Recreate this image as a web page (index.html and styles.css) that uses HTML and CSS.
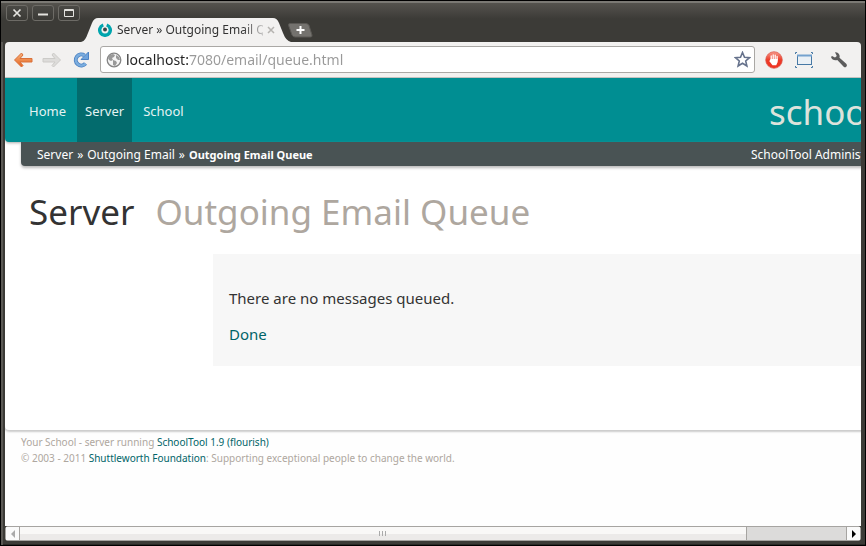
FILE: index.html
```html
<!DOCTYPE html>
<html lang="en">
<head>
<meta charset="utf-8">
<title>Server » Outgoing Email Queue</title>
<link rel="stylesheet" href="styles.css">
</head>
<body>
<div class="window">
  <div class="titlebar">
    <div class="window-buttons">
      <button type="button" aria-label="Close"><svg width="10" height="10" viewBox="0 0 10 10"><path d="M1.500 1.500l7 7M8.500 1.500l-7 7" stroke="#e4e3df" stroke-width="1.700"/></svg></button>
      <button type="button" aria-label="Minimize"><svg width="10" height="10" viewBox="0 0 10 10"><path d="M0 6.500h10" stroke="#e4e3df" stroke-width="2"/></svg></button>
      <button type="button" aria-label="Maximize"><svg width="10" height="10" viewBox="0 0 10 10"><path d="M.5 1.500h9v7h-9zM.5 2.500h9" fill="none" stroke="#e4e3df"/></svg></button>
    </div>
    <div class="tab">
      <svg class="tab-shape" viewBox="0 0 210 24" preserveAspectRatio="none"><path d="M0 24C4 23 5 20 7 15L11 5Q13 0 17 0H192Q196 0 198 5L202 15Q205 23 210 24Z" fill="#f2f1f0"/></svg>
      <svg class="tab-icon" width="14" height="14" viewBox="0 0 14 14"><path d="M5.300 2A5.300 5.300 0 1 0 8.700 2" fill="none" stroke="#00a5ae" stroke-width="3.400"/><circle cx="7" cy="6.500" r="2" fill="#3b4648"/></svg>
      <span class="tab-title">Server » Outgoing Email Queue</span>
      <button type="button" class="tab-close" aria-label="Close tab"><svg width="8" height="8" viewBox="0 0 8 8"><path d="M1 1l6 6M7 1l-6 6" stroke="#b5b3b0" stroke-width="1.500"/></svg></button>
    </div>
    <button type="button" class="new-tab" aria-label="New tab"><svg width="25" height="15" viewBox="0 0 25 15"><path d="M2 .5H18Q20 .5 21 2.500L24 12Q24.500 14 22.500 14H7Q5 14 4 12L.6 2.500Q0 .5 2 .5Z" fill="#74726e" stroke="#5a5854"/><path d="M12.500 3v8M8.500 7h8" stroke="#fff" stroke-width="2"/></svg></button>
  </div>

  <div class="toolbar">
    <button type="button" class="tool" aria-label="Back"><svg width="20" height="18" viewBox="0 0 20 18"><defs><linearGradient id="o" x2="0" y2="1"><stop stop-color="#f8b47e"/><stop offset="1" stop-color="#e4601c"/></linearGradient></defs><path d="M8.500 2L1.500 9l7 7 1.500-1.500L7 11h12V7.500H7L10 4z" fill="url(#o)" stroke="#d9713a" stroke-linejoin="round"/></svg></button>
    <button type="button" class="tool" aria-label="Forward"><svg width="20" height="18" viewBox="0 0 20 18"><path d="M11.500 2l7 7-7 7-1.500-1.500L13 11H1V7.500H13L10 4z" fill="#dddcda" stroke="#cccbc8" stroke-linejoin="round"/></svg></button>
    <button type="button" class="tool" aria-label="Reload"><svg width="18" height="18" viewBox="0 0 18 18"><path d="M13.500 12.500A5.500 5.500 0 1 1 12.500 4.500" fill="none" stroke="#4c82c3" stroke-width="4"/><path d="M16.500 1v7.500H9z" fill="#6fa3dc" stroke="#4c82c3"/><path d="M13.500 12.500A5.500 5.500 0 1 1 12.500 4.500" fill="none" stroke="#7badde" stroke-width="2.400"/></svg></button>
    <div class="address">
      <svg width="16" height="16" viewBox="0 0 16 16"><circle cx="8" cy="8" r="6.800" fill="#f4f4f4" stroke="#858585" stroke-width="1.300"/><path d="M2 6Q3 2.500 7 2l2 1-1 2-2 1 1 2-2 1-2-1zM7 8l3 1 1 2-2 3-2-1zM10 3l3 2 1 3-2 0-2-2z" fill="#999"/></svg>
      <input type="text" aria-label="Address" value="localhost:7080/email/queue.html">
      <button type="button" class="star" aria-label="Bookmark"><svg width="17" height="17" viewBox="0 0 17 17"><path d="M8.500 1.500l2 4.800 5 .4-3.800 3.300 1.200 5-4.400-2.700L4.100 15l1.200-5L1.500 6.700l5-.4z" fill="#fff" stroke="#66728c" stroke-width="1.600"/></svg></button>
    </div>
    <button type="button" class="tool" aria-label="Block ads"><svg width="18" height="18" viewBox="0 0 18 18"><defs><linearGradient id="r" x2="0" y2="1"><stop stop-color="#f79a8b"/><stop offset=".5" stop-color="#ec3b28"/><stop offset="1" stop-color="#f03322"/></linearGradient></defs><circle cx="9" cy="9" r="8.300" fill="url(#r)" stroke="#d9564a" stroke-width=".7"/><path d="M6.200 9.500V5M8.200 8V3.800M10.200 8V4.200M12.100 9V5.500" stroke="#fff" stroke-width="1.300" stroke-linecap="round"/><path d="M5.600 8h7.100v3l-1.500 3.200H7.500L4.200 10l.8-.7z" fill="#fff"/></svg></button>
    <button type="button" class="tool capture" aria-label="Capture page"><svg width="20" height="18" viewBox="0 0 20 18"><rect x="3.500" y="4.500" width="14" height="9" fill="#eaf0f5" stroke="#4779a5"/><path d="M3 4.500h15" stroke="#74a2ce" stroke-width="2"/><path d="M1.500 3V1.500H3M17 1.500h1.500V3M18.500 15v1.500H17M3 16.500H1.500V15" fill="none" stroke="#4779a5"/></svg></button>
    <button type="button" class="tool" aria-label="Settings"><svg width="18" height="18" viewBox="0 0 18 18"><path d="M5 1.200Q9 1 9.700 5l-.2 1.700 7 6.300q1 1.500-.2 2.700-1.200 1-2.600 0L7.300 9Q2.500 10 1 6l1-1 3 1.500L6.800 5z" fill="#5c5c5c"/></svg></button>
  </div>

  <div class="viewport">
    <div class="page">
      <div class="sheet">
        <header class="header">
          <nav class="nav">
            <a href="#">Home</a>
            <a href="#" class="active">Server</a>
            <a href="#">School</a>
          </nav>
          <a href="#" class="brand">schooltool</a>
        </header>
        <div class="crumb-bar">
          <nav class="crumbs" aria-label="Breadcrumb">
            <a href="#">Server</a><span>»</span><a href="#">Outgoing Email</a><span>»</span><a href="#" class="current">Outgoing Email Queue</a>
          </nav>
          <a href="#" class="user">SchoolTool Administrator</a>
        </div>
        <h1>Server <span>Outgoing Email Queue</span></h1>
        <main class="content">
          <p>There are no messages queued.</p>
          <p><a href="#">Done</a></p>
        </main>
      </div>
      <footer class="footer">
        <p>Your School - server running <a href="#">SchoolTool 1.9 (flourish)</a></p>
        <p>© 2003 - 2011 <a href="#">Shuttleworth Foundation</a>: Supporting exceptional people to change the world.</p>
      </footer>
    </div>
  </div>

  <div class="scrollbar">
    <button type="button" aria-label="Scroll left"><svg width="4" height="8" viewBox="0 0 4 8"><path d="M4 0v8L0 4z" fill="#aaa"/></svg></button>
    <div class="track"><div class="thumb"><i></i><i></i><i></i></div></div>
    <button type="button" class="right" aria-label="Scroll right"><svg width="4" height="8" viewBox="0 0 4 8"><path d="M0 0v8L4 4z" fill="#000"/></svg></button>
  </div>
</div>
</body>
</html>
```

FILE: styles.css
```css
* {
  box-sizing: border-box;
}

body {
  margin: 0;
  background: #000;
  color: #333;
  font-family: "Noto Sans", "Open Sans", sans-serif;
}

button {
  display: flex;
  align-items: center;
  justify-content: center;
  flex: none;
  margin: 0;
  padding: 0;
  border: 0;
  background: none;
}

svg {
  display: block;
  flex: none;
}

a {
  color: inherit;
  text-decoration: none;
}

.window {
  display: flex;
  flex-direction: column;
  min-height: 100vh;
  padding: 0 4px 4px;
  background: #3c3b37;
  border: 1px solid #000;
  border-top: 0;
  box-shadow: inset 2px 0 0 #5b5955, inset 0 -1px 0 #2a2926;
}

/* Title bar */

.titlebar {
  display: flex;
  align-items: flex-end;
  height: 42px;
  margin: 0 -4px;
  padding-left: 5px;
  border-top: 1px solid #000;
  background: linear-gradient(#7b7974 0, #7b7974 2px, #55534e 2px, #3c3b37 18px);
}

.window-buttons {
  display: flex;
  align-self: flex-start;
  gap: 4px;
  margin-top: 4px;
}

.window-buttons button {
  width: 22px;
  height: 16px;
  border: 1px solid #6d6b66;
  border-radius: 3px;
  background: linear-gradient(#4a4945, #3b3a36);
}

.tab {
  position: relative;
  display: flex;
  align-items: center;
  width: 210px;
  height: 24px;
  margin-left: 1px;
  padding: 0 16px 0 17px;
}

.tab-shape {
  position: absolute;
  inset: 0;
  width: 100%;
  height: 100%;
}

.tab-icon,
.tab-title,
.tab-close {
  position: relative;
}

.tab-title {
  flex: 1;
  min-width: 0;
  margin: 0 4px 0 5px;
  overflow: hidden;
  font-size: 12px;
  line-height: 20px;
  white-space: nowrap;
  mask-image: linear-gradient(90deg, #000 86%, transparent 104%);
}

.tab-close {
  width: 8px;
}

.new-tab {
  margin: 0 0 4px -3px;
}

/* Toolbar */

.toolbar {
  display: flex;
  align-items: center;
  height: 36px;
  padding: 0 12px 0 8px;
  border-bottom: 1px solid #c4c2bf;
  border-radius: 4px 4px 0 0;
  background: #f2f1f0;
}

.tool {
  width: 20px;
  height: 20px;
  margin-right: 9px;
}

.address {
  display: flex;
  flex: 1;
  align-items: center;
  height: 27px;
  margin-right: 9px;
  padding: 0 3px 0 5px;
  border: 1px solid #aaa8a5;
  border-radius: 3px;
  background: #fff;
}

.address input {
  flex: 1;
  min-width: 0;
  margin: 0 4px;
  padding: 0;
  border: 0;
  outline: 0;
  background: linear-gradient(90deg, #222 62px, #999 62px);
  background-clip: text;
  color: transparent;
  font: 14px/20px "Noto Sans", "Open Sans", sans-serif;
}

.capture {
  margin: 0 15px 0 1px;
}

.toolbar .tool:last-child {
  margin-right: 0;
}

/* Page */

.viewport {
  display: flex;
  flex: 1;
  overflow: hidden;
  background: #fefefe;
}

.page {
  flex: none;
  width: 100%;
  min-width: 976px;
}

.sheet {
  padding-bottom: 64px;
  border-radius: 0 0 4px 4px;
  background: #fff;
  box-shadow: 0 1px 2px 1px #ccc;
}

.header {
  display: flex;
  justify-content: space-between;
  height: 64px;
  padding-left: 16px;
  border-radius: 0 0 4px 4px;
  background: #008e92;
  box-shadow: 0 1px 3px #aaa;
  color: #e4f3f2;
}

.nav {
  display: flex;
  gap: 3px;
}

.nav a {
  padding: 0 8px;
  font-size: 13px;
  line-height: 66px;
}

.nav .active {
  height: 64px;
  background: #036b6d;
}

.brand {
  width: 212px;
  color: #dde3dc;
  font-size: 35px;
  line-height: 68px;
}

.crumb-bar {
  display: flex;
  justify-content: space-between;
  height: 24px;
  margin: 0 16px;
  padding-left: 16px;
  border-radius: 0 0 4px 4px;
  background: #495354;
  box-shadow: 0 2px 3px #bbb;
  color: #fff;
  font-size: 12px;
  line-height: 25px;
}

.crumbs span {
  margin: 0 4px;
}

.current {
  font-size: 11px;
  font-weight: 700;
}

.user {
  width: 214px;
}

h1 {
  margin: 20px 24px 16px;
  font-size: 35px;
  font-weight: 400;
  line-height: 52px;
}

h1 span {
  margin-left: 12px;
  color: #aea79f;
}

.content {
  margin: 0 16px 0 208px;
  padding: 32px 16px 20px;
  background: #f7f7f7;
  font-size: 15px;
  line-height: 24px;
}

.content p {
  margin: 0 0 12px;
}

.content p:last-child {
  margin: 0;
}

.content a {
  color: #006468;
}

.footer {
  padding: 4px 16px;
  color: #aea79f;
  font-size: 10px;
  line-height: 16px;
}

.footer p {
  margin: 0;
}

.footer a {
  color: #006468;
}

/* Scrollbar */

.scrollbar {
  display: flex;
  height: 15px;
  border: 1px solid #a6a4a1;
  border-radius: 3px;
  background: #fafafa;
}

.scrollbar button {
  width: 13px;
  background: #fafafa;
}

.track {
  flex: 1;
  border: solid #a6a4a1;
  border-width: 0 1px;
  background: #dcdbda;
}

.thumb {
  display: flex;
  align-items: center;
  justify-content: center;
  gap: 2px;
  width: 88%;
  height: 13px;
  border-right: 1px solid #a6a4a1;
  background: linear-gradient(#f9f8f7 50%, #eceae9 50%);
}

.thumb i {
  width: 1px;
  height: 5px;
  background: #aaa;
}
```
